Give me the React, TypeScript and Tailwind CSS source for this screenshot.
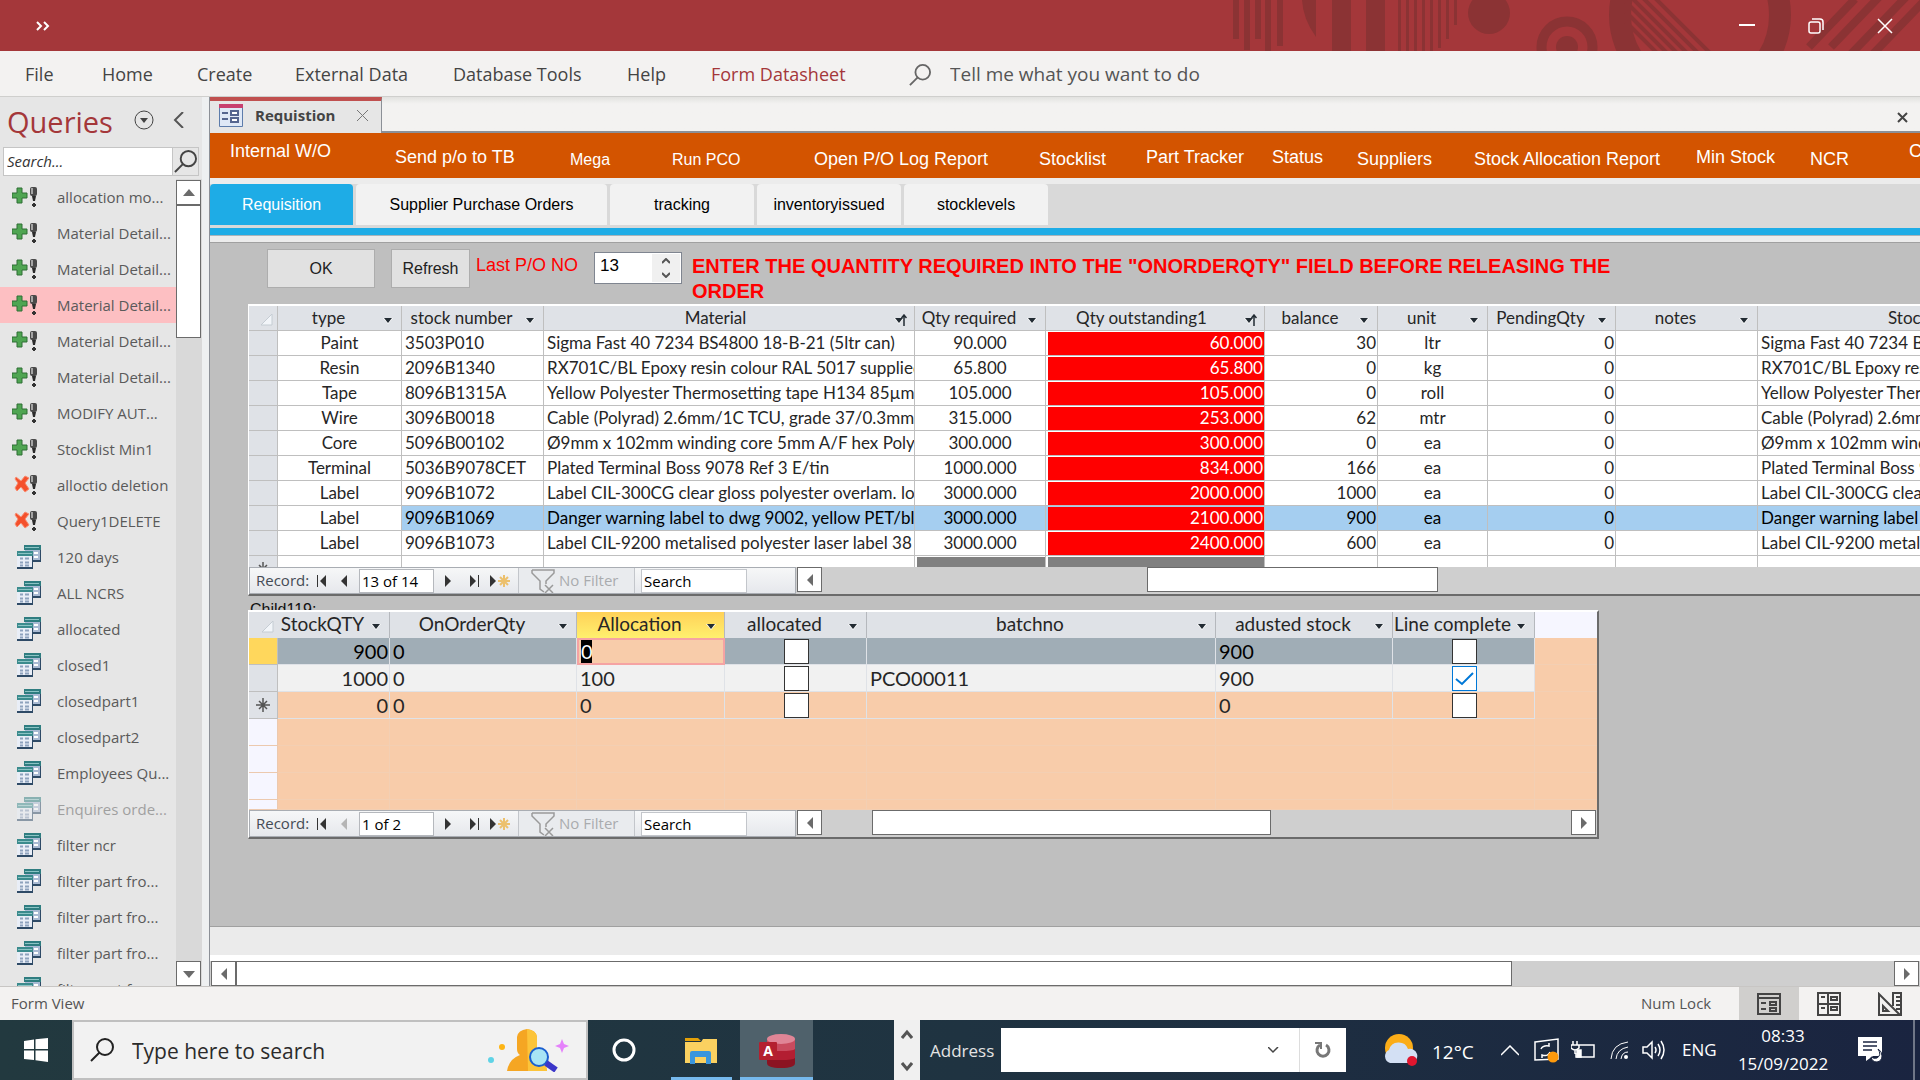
import type { ReactNode } from 'react';
import clsx from 'clsx';

const queries = [
  { name: 'allocation mo...', kind: 'append' },
  { name: 'Material Detail...', kind: 'append' },
  { name: 'Material Detail...', kind: 'append' },
  { name: 'Material Detail...', kind: 'append', active: true },
  { name: 'Material Detail...', kind: 'append' },
  { name: 'Material Detail...', kind: 'append' },
  { name: 'MODIFY AUT...', kind: 'append' },
  { name: 'Stocklist Min1', kind: 'append' },
  { name: 'alloctio deletion', kind: 'delete' },
  { name: 'Query1DELETE', kind: 'delete' },
  { name: '120 days', kind: 'select' },
  { name: 'ALL NCRS', kind: 'select' },
  { name: 'allocated', kind: 'select' },
  { name: 'closed1', kind: 'select' },
  { name: 'closedpart1', kind: 'select' },
  { name: 'closedpart2', kind: 'select' },
  { name: 'Employees Qu...', kind: 'select' },
  { name: 'Enquires orde...', kind: 'select', hidden: true },
  { name: 'filter ncr', kind: 'select' },
  { name: 'filter part fro...', kind: 'select' },
  { name: 'filter part fro...', kind: 'select' },
  { name: 'filter part fro...', kind: 'select' },
  { name: 'filter part fro...', kind: 'select' },
];

const ribbonTabs = [
  { label: 'File', slot: 'w-[77px]' },
  { label: 'Home', slot: 'w-[95px]' },
  { label: 'Create', slot: 'w-[98px]' },
  { label: 'External Data', slot: 'w-[158px]' },
  { label: 'Database Tools', slot: 'w-[174px]' },
  { label: 'Help', slot: 'w-[84px]' },
  { label: 'Form Datasheet', slot: 'w-[198px]', active: true },
];

const formLinks = [
  { label: 'Internal W/O', slot: 'w-[165px] pb-3' },
  { label: 'Send p/o to TB', slot: 'w-[175px]' },
  { label: 'Mega', slot: 'w-[102px] pt-1', small: true },
  { label: 'Run PCO', slot: 'w-[142px] pt-1', small: true },
  { label: 'Open P/O Log Report', slot: 'w-[225px] pt-1' },
  { label: 'Stocklist', slot: 'w-[107px] pt-1' },
  { label: 'Part Tracker', slot: 'w-[126px]' },
  { label: 'Status', slot: 'w-[85px]' },
  { label: 'Suppliers', slot: 'w-[117px] pt-1' },
  { label: 'Stock Allocation Report', slot: 'w-[222px] pt-1' },
  { label: 'Min Stock', slot: 'w-[114px]' },
  { label: 'NCR', slot: 'w-[99px] pt-1' },
  { label: 'C', slot: 'w-[40px] pb-3' },
];

const stockRows = [
  ['Paint', '3503P010', 'Sigma Fast 40 7234 BS4800 18-B-21 (5ltr can)', '90.000', '60.000', '30', 'ltr'],
  ['Resin', '2096B1340', 'RX701C/BL Epoxy resin colour RAL 5017 supplied', '65.800', '65.800', '0', 'kg'],
  ['Tape', '8096B1315A', 'Yellow Polyester Thermosetting tape H134 85µm x', '105.000', '105.000', '0', 'roll'],
  ['Wire', '3096B0018', 'Cable (Polyrad) 2.6mm/1C TCU, grade 37/0.3mm 7', '315.000', '253.000', '62', 'mtr'],
  ['Core', '5096B00102', 'Ø9mm x 102mm winding core 5mm A/F hex Polypro', '300.000', '300.000', '0', 'ea'],
  ['Terminal', '5036B9078CET', 'Plated Terminal Boss 9078 Ref 3 E/tin', '1000.000', '834.000', '166', 'ea'],
  ['Label', '9096B1072', 'Label CIL-300CG clear gloss polyester overlam. lo', '3000.000', '2000.000', '1000', 'ea'],
  ['Label', '9096B1069', 'Danger warning label to dwg 9002, yellow PET/bla', '3000.000', '2100.000', '900', 'ea'],
  ['Label', '9096B1073', 'Label CIL-9200 metalised polyester laser label 38', '3000.000', '2400.000', '600', 'ea'],
];
const selectedStock = 7;

const stockColumns = [
  { label: 'type', width: 124 },
  { label: 'stock number', width: 142 },
  { label: 'Material', width: 371, sorted: true },
  { label: 'Qty required', width: 131 },
  { label: 'Qty outstanding1', width: 219, sorted: true },
  { label: 'balance', width: 113 },
  { label: 'unit', width: 110 },
  { label: 'PendingQty', width: 128 },
  { label: 'notes', width: 142 },
];

const batchColumns = [
  { label: 'StockQTY', width: 112 },
  { label: 'OnOrderQty', width: 187 },
  { label: 'Allocation', width: 148, active: true },
  { label: 'allocated', width: 142 },
  { label: 'batchno', width: 349 },
  { label: 'adusted stock', width: 177 },
  { label: 'Line complete', width: 142 },
];

const batchRows = [
  { stock: '900', order: '0', allocation: '0', batch: '', adjusted: '900', complete: false },
  { stock: '1000', order: '0', allocation: '100', batch: 'PCO00011', adjusted: '900', complete: true },
  { stock: '0', order: '0', allocation: '0', batch: '', adjusted: '0', complete: false },
];

function QueryIcon({ kind }: { kind: string }) {
  if (kind === 'select') {
    return (
      <svg width="24" height="24" viewBox="0 0 24 24" className="ml-[5px] shrink-0">
        <rect x="8" y="0" width="16" height="17" fill="#2e4a66" />
        <rect x="8" y="0" width="15" height="15" fill="#a9bad3" />
        <rect x="7" y="0" width="17" height="5" fill="#2f7d80" />
        <path d="M8 2.500h14" stroke="#8cc4c4" />
        <rect x="17" y="7" width="4" height="2" fill="#fff" />
        <rect x="17" y="11" width="4" height="2" fill="#fff" />
        <rect x="0" y="6" width="16" height="18" fill="#2e4a66" />
        <rect x="0" y="6" width="15" height="16" fill="#e9eef7" />
        <rect x="0" y="6" width="16" height="5" fill="#3b8b8d" />
        <path d="M1 8.500h14" stroke="#8cc4c4" />
        <path d="M3 13.500h3M8 13.500h4M3 17.500h3M8 17.500h4M3 20.500h3M8 20.500h4" stroke="#8ea2bd" strokeWidth="2" />
      </svg>
    );
  }
  return (
    <svg width="26" height="20" viewBox="0 0 26 20" className="shrink-0">
      {kind === 'append' ? (
        <path d="M5 1h5v5h5v5h-5v5H5v-5H0V6h5z" fill="#4fa552" stroke="#2f6e35" />
      ) : (
        <path d="M4 2l5 4 4-5 4 2-4 5 4 6-4 3-4-5-4 4-2-3 3-5-3-4z" fill="#f4502c" stroke="#f98c70" />
      )}
      <rect x="18" y="0" width="7" height="9" rx="2" fill="#4a4a4a" />
      <rect x="19" y="1" width="2" height="6" fill="#a5a5a5" />
      <path d="M20 9h4l-1 5h-2z" fill="#2b2b2b" />
      <path d="M20 18h4M22 16v4" stroke="#333" strokeWidth="2" />
    </svg>
  );
}

function SearchGlyph({ size, color }: { size: number; color: string }) {
  return (
    <svg width={size} height={size} viewBox="0 0 24 24" fill="none" stroke={color} strokeWidth="2">
      <circle cx="15" cy="9" r="8" />
      <path d="M9.500 14.500L1 23" />
    </svg>
  );
}

function Arrow({ dir, color = '#6b6b6b' }: { dir: 'up' | 'down' | 'left' | 'right'; color?: string }) {
  const paths = {
    up: 'M0 9l6-7 6 7z',
    down: 'M0 3l6 7 6-7z',
    left: 'M9 0L3 6l6 6z',
    right: 'M3 0l6 6-6 6z',
  };
  return (
    <svg width="12" height="12" viewBox="0 0 12 12">
      <path d={paths[dir]} fill={color} />
    </svg>
  );
}

function ScrollButton({ dir }: { dir: 'up' | 'down' | 'left' | 'right' }) {
  return (
    <button aria-label={`Scroll ${dir}`} className="flex h-[25px] w-[25px] shrink-0 items-center justify-center border border-[#6b6b6b] bg-white">
      <Arrow dir={dir} />
    </button>
  );
}

function TitleBar() {
  return (
    <header className="relative flex h-[51px] shrink-0 items-center justify-between overflow-hidden bg-[#a4373a] text-white">
      <svg className="absolute top-0 right-0" width="690" height="51" viewBox="1230 0 690 51" fill="#8b3334">
        <path d="M1233 0h6v39h-6zM1244 0h6v50h-6zM1255 0h6v39h-6zM1265 0h6v51h-6zM1277 0h6v46h-6z" />
        <path d="M1302 0h14v37q-13-18-14-37z" />
        <path d="M1332 0h19v51h-19zM1366 0h19v51h-19z" />
        <path d="M1398 0h3v51h-3zM1406 0h3v51h-3zM1414 0h3v51h-3zM1422 0h3v51h-3zM1430 0h3v51h-3zM1438 0h3v48h-3zM1446 0h3v39h-3zM1454 0h3v25h-3z" />
        <circle cx="1489" cy="13" r="21" />
        <circle cx="1567" cy="47" r="25.500" fill="none" stroke="#8b3334" strokeWidth="10" />
        <circle cx="1567" cy="47" r="11" />
        <circle cx="1700" cy="15" r="80" fill="none" stroke="#8b3334" strokeWidth="22" />
        <path d="M1626 2l54 54M1626 12l44 44M1626 22l34 34M1632-2l58 58M1643-2l58 58M1655-2l58 58" stroke="#8b3334" strokeWidth="4" />
        <path d="M1809 47l46-48M1831 47l50-52M1850 55l56-58M1872 55l56-58" stroke="#8b3334" strokeWidth="8" />
      </svg>
      <button aria-label="Customize Quick Access Toolbar" className="ml-9 flex h-8 w-8 items-center">
        <svg width="14" height="10" viewBox="0 0 14 10" fill="none" stroke="#fff" strokeWidth="2">
          <path d="M1 1l4 4-4 4M8 1l4 4-4 4" />
        </svg>
      </button>
      <div className="relative flex items-center gap-[53px] pr-[27px]">
        <button aria-label="Minimize">
          <svg width="16" height="16" viewBox="0 0 16 16" stroke="#fff" strokeWidth="2"><path d="M0 7h16" /></svg>
        </button>
        <button aria-label="Restore">
          <svg width="16" height="16" viewBox="0 0 16 16" fill="none" stroke="#fff" strokeWidth="1.500">
            <rect x="1" y="4" width="11" height="11" rx="2" />
            <path d="M4 1h8q3 0 3 3v8" />
          </svg>
        </button>
        <button aria-label="Close">
          <svg width="16" height="16" viewBox="0 0 16 16" stroke="#fff" strokeWidth="1.500"><path d="M1 1l14 14M15 1L1 15" /></svg>
        </button>
      </div>
    </header>
  );
}

function Ribbon() {
  return (
    <nav className="flex h-[46px] shrink-0 items-center border-b border-[#cfcfcd] bg-[#f3f2f1] pt-[2px] pl-[25px] text-[18px] text-[#444]">
      {ribbonTabs.map((tab) => (
        <button key={tab.label} className={clsx('shrink-0 text-left whitespace-nowrap', tab.slot, tab.active && 'text-[#a4373a]')}>
          {tab.label}
        </button>
      ))}
      <label className="flex items-center gap-[19px]">
        <SearchGlyph size={22} color="#666" />
        <input aria-label="Tell me what you want to do" placeholder="Tell me what you want to do" className="w-72 bg-transparent text-[19px] placeholder:text-[#555] outline-none" />
      </label>
    </nav>
  );
}

function Sidebar() {
  return (
    <aside className="flex w-[202px] shrink-0 flex-col bg-[#e6e6e6]">
      <div className="flex h-[50px] items-center pl-[7px]">
        <h2 className="w-[127px] text-[29px] text-[#a4373a]">Queries</h2>
        <button aria-label="Object type" className="-mt-1">
          <svg width="20" height="20" viewBox="0 0 20 20" fill="none" stroke="#444">
            <circle cx="10" cy="10" r="9" />
            <path d="M6 8h8l-4 5z" fill="#444" stroke="none" />
          </svg>
        </button>
        <button aria-label="Collapse pane" className="-mt-1 ml-[19px]">
          <svg width="11" height="16" viewBox="0 0 11 16" fill="none" stroke="#555" strokeWidth="2"><path d="M10 0L2 8l8 8" /></svg>
        </button>
      </div>
      <label className="ml-[3px] flex h-[29px] w-[196px] border border-[#c5c5c5] bg-white">
        <input aria-label="Search queries" placeholder="Search..." className="min-w-0 flex-1 pl-[3px] text-[15px] italic placeholder:text-[#333] outline-none" />
        <span className="flex w-[26px] items-center justify-center border-l border-[#c5c5c5] bg-[#e6e6e6]">
          <SearchGlyph size={23} color="#444" />
        </span>
      </label>
      <div className="mt-[3px] flex min-h-0 flex-1">
        <ul className="w-[176px] overflow-hidden text-[15px] text-[#5a5a5a]">
          {queries.map((query, index) => (
            <li key={index} className={clsx('h-9', query.hidden && 'opacity-50')}>
              <button className={clsx('flex h-9 w-full items-center pl-3 text-left whitespace-nowrap', query.active && 'bg-[#fdbfc2]')}>
                <span className="w-[45px]"><QueryIcon kind={query.kind} /></span>
                {query.name}
              </button>
            </li>
          ))}
        </ul>
        <div className="flex flex-1 flex-col bg-[#d9d9d9] pr-px pt-px">
          <ScrollButton dir="up" />
          <div className="h-[133px] border border-[#6b6b6b] bg-white" />
          <div className="flex-1" />
          <ScrollButton dir="down" />
        </div>
      </div>
    </aside>
  );
}

function ColumnHeader({ label, sorted }: { label: string; sorted?: boolean }) {
  return (
    <div className="flex items-center overflow-hidden whitespace-nowrap">
      <span className="min-w-0 flex-1 overflow-hidden text-center">{label}</span>
      <button aria-label={`Filter ${label}`} className={sorted ? 'mx-[7px] mt-1' : 'mr-2 ml-1 mt-1'}>
        <svg width={sorted ? 13 : 10} height="12" viewBox={sorted ? '0 0 13 12' : '0 0 10 12'}>
          <path d="M0 4h10L5 10z" fill="#fff" />
          <path d="M1 4h8L5 9z" fill="#222b33" />
          {sorted && <path d="M10 12V2M7.500 4L10 1l2.500 3" stroke="#222b33" strokeWidth="1.500" fill="none" />}
        </svg>
      </button>
    </div>
  );
}

function Corner() {
  return (
    <svg width="12" height="12" viewBox="0 0 12 12" className="ml-auto mt-1 mr-1">
      <path d="M11 0v11H0z" fill="#f2f5f9" stroke="#c5ccd3" />
    </svg>
  );
}

function NewRowMark() {
  return (
    <svg width="14" height="14" viewBox="0 0 14 14" className="mx-auto block" stroke="#555" strokeWidth="1.500">
      <path d="M7 0v14M0 7h14M3 3l8 8M11 3l-8 8" />
    </svg>
  );
}

function RecordBar({ position, atStart, children }: { position: string; atStart?: boolean; children: ReactNode }) {
  return (
    <div className="flex h-[27px] bg-[#cfcfcf] text-[15px]">
      <div className="flex w-[547px] shrink-0 items-center border border-[#a9adb3] bg-linear-to-b from-[#f6f7f8] to-[#e6e8ec]">
        <span className="w-[66px] pl-[6px] text-[#444b55]">Record:</span>
        <button aria-label="First record" className="w-[22px]">
          <svg width="12" height="12" viewBox="0 0 12 12" fill="#333"><path d="M1 0h1v12H1zM10 0v12L4 6z" /></svg>
        </button>
        <button aria-label="Previous record" className="w-[21px]">
          <Arrow dir="left" color={atStart ? '#b5b5b5' : '#333'} />
        </button>
        <input aria-label="Current record" defaultValue={position} className="h-6 w-[75px] border border-[#b5b8bd] bg-white pl-[2px] text-black outline-none" />
        <button aria-label="Next record" className="ml-2 w-[26px]"><Arrow dir="right" color="#333" /></button>
        <button aria-label="Last record" className="w-[22px]">
          <svg width="12" height="12" viewBox="0 0 12 12" fill="#333"><path d="M10 0h1v12h-1zM2 0v12l6-6z" /></svg>
        </button>
        <button aria-label="New record" className="w-[28px]">
          <svg width="21" height="14" viewBox="0 0 21 14">
            <path d="M0 1v12l6-6z" fill="#333" />
            <path d="M14 1v12M8 7h12M10 3l8 8M18 3l-8 8" stroke="#ecc06c" strokeWidth="2" />
          </svg>
        </button>
        <button className="flex h-full w-[117px] items-center gap-1 border-x border-[#c3c6cb] bg-[#e9ebee] pl-3 text-[#a9abae]">
          <svg width="24" height="24" viewBox="0 0 24 24" fill="none" stroke="#9a9a9a" strokeWidth="1.500">
            <path d="M1 1h22v3l-8 8v3M1 1v3l8 8v8l4 3M14 16l8 8M22 16l-8 8" />
          </svg>
          <span className="whitespace-nowrap">No Filter</span>
        </button>
        <input aria-label="Search records" defaultValue="Search" className="ml-[6px] h-6 w-[106px] border border-[#c3c6cb] bg-white pl-[2px] text-black outline-none" />
      </div>
      {children}
    </div>
  );
}

function StockGrid() {
  const cell = 'border-r border-b border-[#bfbfbf] overflow-hidden whitespace-nowrap p-0';
  return (
    <section className="overflow-hidden border-t-2 border-l border-b-2 border-t-white border-l-white border-b-[#6b6b6b] bg-white">
      <table className="w-[1880px] table-fixed border-separate border-spacing-0 font-['Comic_Sans_MS','Lato',sans-serif] text-[17px] leading-[24px] text-[#262626]">
        <colgroup>
          <col className="w-[29px]" />
          {stockColumns.map((column) => <col key={column.label} style={{ width: column.width }} />)}
          <col />
        </colgroup>
        <thead>
          <tr className="h-[25px] bg-[#dfe2e7]">
            <th className={cell}><Corner /></th>
            {stockColumns.map((column) => (
              <th key={column.label} className={clsx(cell, 'font-normal')}>
                <ColumnHeader label={column.label} sorted={column.sorted} />
              </th>
            ))}
            <th className={clsx(cell, 'pl-[130px] text-left font-normal')}>Stock</th>
          </tr>
        </thead>
        <tbody>
          {stockRows.map((row, index) => {
            const tint = index === selectedStock && 'bg-[#a5cef0] text-black';
            return (
              <tr key={row[1]} className="h-[25px]">
                <td className={clsx(cell, 'bg-[#dfe2e7]')} />
                <td className={clsx(cell, 'text-center')}>{row[0]}</td>
                <td className={clsx(cell, tint, 'pl-[3px]')}>{row[1]}</td>
                <td className={clsx(cell, tint, 'pl-[3px]')}>{row[2]}</td>
                <td className={clsx(cell, tint, 'text-center')}>{row[3]}</td>
                <td className={clsx(cell, tint)}>
                  <div className="ml-[2px] mt-px h-[23px] bg-[#ff0000] pr-px text-right leading-[22px] text-white">{row[4]}</div>
                </td>
                <td className={clsx(cell, tint, 'pr-px text-right')}>{row[5]}</td>
                <td className={clsx(cell, tint, 'text-center')}>{row[6]}</td>
                <td className={clsx(cell, tint, 'pr-px text-right')}>0</td>
                <td className={clsx(cell, tint)} />
                <td className={clsx(cell, tint, 'pl-[3px]')}>{row[2]}</td>
              </tr>
            );
          })}
          <tr>
            <td className="border-r border-[#bfbfbf] bg-[#dfe2e7] p-0">
              <div className="h-[11px] overflow-hidden pt-[6px]"><NewRowMark /></div>
            </td>
            {stockColumns.map((column) => (
              <td key={column.label} className="border-r border-[#bfbfbf] p-0">
                {column.label.startsWith('Qty') && <div className="ml-[2px] mt-px h-[10px] bg-[#808080]" />}
              </td>
            ))}
            <td />
          </tr>
        </tbody>
      </table>
      <RecordBar position="13 of 14">
        <div className="ml-px flex flex-1">
          <ScrollButton dir="left" />
          <div className="ml-[325px] h-[25px] w-[291px] border border-[#6b6b6b] bg-white" />
        </div>
      </RecordBar>
    </section>
  );
}

function Tick({ label, checked }: { label: string; checked?: boolean }) {
  return (
    <span className="relative mx-auto block h-[25px] w-[25px]">
      <input
        type="checkbox"
        aria-label={label}
        defaultChecked={checked}
        className="peer block h-[25px] w-[25px] appearance-none border border-[#333] bg-white checked:border-[#0078d7]"
      />
      <svg className="pointer-events-none absolute inset-0 hidden peer-checked:block" width="25" height="25" viewBox="0 0 25 25" fill="none" stroke="#0078d7" strokeWidth="2">
        <path d="M4 13l6 5L21 7" />
      </svg>
    </span>
  );
}

function BatchGrid() {
  const cell = 'border-r border-b border-[#dfe2e7] overflow-hidden whitespace-nowrap p-0';
  const blank = 'border-r border-b border-[#f3cfb3] p-0';
  return (
    <section className="w-[1351px] overflow-hidden border-t-2 border-r-2 border-b-2 border-l border-t-white border-r-[#6b6b6b] border-b-[#6b6b6b] border-l-white bg-[#f8ccaa]">
      <table className="w-full table-fixed border-separate border-spacing-0 font-['Tw_Cen_MT','Lato',sans-serif] text-[20px] leading-[24px] text-[#262626]">
        <colgroup>
          <col className="w-[29px]" />
          {batchColumns.map((column) => <col key={column.label} style={{ width: column.width }} />)}
          <col />
        </colgroup>
        <thead>
          <tr className="h-[26px] bg-[#dfe2e7] text-[19px]">
            <th className="p-0"><Corner /></th>
            {batchColumns.map((column) => (
              <th
                key={column.label}
                className={clsx('overflow-hidden border-r border-[#b5b8bd] p-0 pb-[2px] font-normal', column.active && 'bg-linear-to-b from-[#ffd158] to-[#fff06e]')}
              >
                <ColumnHeader label={column.label} />
              </th>
            ))}
            <th className="bg-[#f6f6ff]" />
          </tr>
        </thead>
        <tbody>
          {batchRows.map((row, index) => (
            <tr key={index} className={clsx('h-[27px]', index === 0 && 'bg-[#a0adb6] text-black', index === 1 && 'bg-[#f1f1f1]')}>
              <td className={clsx('border-r border-b border-[#bfbfbf] p-0', index === 0 ? 'bg-[#ffd75c]' : 'bg-[#dfe2e7]')}>
                {index === 2 && <NewRowMark />}
              </td>
              <td className={clsx(cell, 'pr-px text-right')}>{row.stock}</td>
              <td className={clsx(cell, 'pl-[3px]')}>{row.order}</td>
              {index === 0 ? (
                <td className="border-2 border-[#f5a3a3] bg-[#f8ccaa] p-0 pl-[2px] leading-[23px]">
                  <span className="block w-[11px] bg-black text-white">{row.allocation}</span>
                </td>
              ) : (
                <td className={clsx(cell, 'pl-[3px]')}>{row.allocation}</td>
              )}
              <td className={clsx(cell, 'pl-[2px]')}><Tick label={`allocated ${index + 1}`} /></td>
              <td className={clsx(cell, 'pl-[3px]')}>{row.batch}</td>
              <td className={clsx(cell, 'pl-[3px]')}>{row.adjusted}</td>
              <td className={clsx(cell, 'pl-[2px]')}><Tick label={`Line complete ${index + 1}`} checked={row.complete} /></td>
              <td className="border-b border-[#f3cfb3] bg-[#f8ccaa] p-0" />
            </tr>
          ))}
          {[0, 1, 2, 3].map((line) => (
            <tr key={line} className={line === 3 ? 'h-[10px]' : 'h-[27px]'}>
              <td className="border-r border-b border-[#ecc9ae] bg-[#f6f6ff] p-0" />
              {batchColumns.map((column) => <td key={column.label} className={blank} />)}
              <td className="border-b border-[#f3cfb3] p-0" />
            </tr>
          ))}
        </tbody>
      </table>
      <RecordBar position="1 of 2" atStart>
        <div className="ml-px flex flex-1 pr-px">
          <ScrollButton dir="left" />
          <div className="ml-[50px] h-[25px] w-[399px] border border-[#6b6b6b] bg-white" />
          <div className="flex-1" />
          <ScrollButton dir="right" />
        </div>
      </RecordBar>
    </section>
  );
}

function FormView() {
  const tab = 'h-[41px] rounded-t-sm bg-[#f2f2f2] text-black';
  return (
    <main className="flex min-w-0 flex-1 flex-col overflow-hidden border-l border-[#8c9097] bg-[#f3f2f1]">
      <div className="flex h-[36px] shrink-0 items-end justify-between border-b-2 border-[#8c9097] bg-linear-to-b from-[#e2e2e0] to-[#f3f2f1] to-20%">
        <div className="-mb-[2px] flex h-[36px] w-[172px] items-center border-t-4 border-r border-t-[#c0504f] border-r-[#8c9097] bg-[#e6e6e6] pb-1 pl-[9px]">
          <svg width="24" height="23" viewBox="0 0 24 23" className="shrink-0">
            <rect width="24" height="23" rx="1" fill="#5d7cab" />
            <rect x="1" y="3" width="22" height="19" fill="#dfe8f6" />
            <rect width="24" height="4" fill="#c8406f" />
            <path d="M3 9h6M3 15h6" stroke="#55658f" strokeWidth="2" />
            <path d="M12 7h7v4h-7zM12 14h7v4h-7z" fill="#fff" stroke="#55658f" strokeWidth="2" />
          </svg>
          <span className="w-[114px] pl-3 text-[15px] font-bold text-[#444]">Requistion</span>
          <button aria-label="Close Requistion">
            <svg width="11" height="11" viewBox="0 0 11 11" stroke="#777"><path d="M0 0l11 11M11 0L0 11" /></svg>
          </button>
        </div>
        <button aria-label="Close form" className="mr-3 mb-2">
          <svg width="11" height="11" viewBox="0 0 11 11" stroke="#444" strokeWidth="2"><path d="M1 1l9 9M10 1l-9 9" /></svg>
        </button>
      </div>

      <div className="flex h-[45px] shrink-0 items-stretch overflow-hidden bg-[#d35400] pt-1 pl-5 font-['Liberation_Sans',Arial,sans-serif] text-white">
        {formLinks.map((link) => (
          <button key={link.label} className={clsx('shrink-0 text-left whitespace-nowrap', link.slot, link.small ? 'text-[16px]' : 'text-[18px]')}>
            {link.label}
          </button>
        ))}
      </div>

      <div className="shrink-0 bg-[#ececec] pt-[6px] pb-[6px] font-['Liberation_Sans',Arial,sans-serif] text-[16px]">
        <div className="flex gap-[3px] bg-[#d9d9d9] pb-[3px]">
          <button className="h-[41px] w-[143px] rounded-t-sm bg-[#1eace6] text-white">Requisition</button>
          <button className={clsx(tab, 'w-[251px]')}>Supplier Purchase Orders</button>
          <button className={clsx(tab, 'w-[144px]')}>tracking</button>
          <button className={clsx(tab, 'w-[144px]')}>inventoryissued</button>
          <button className={clsx(tab, 'w-[144px]')}>stocklevels</button>
        </div>
        <div className="h-2 border-b border-[#a9b4ba] bg-[#1eace6]" />
      </div>

      <div className="min-h-0 flex-1 border-y border-[#a0a0a0] bg-[#bfbfbf] pl-[38px]">
        <div className="flex h-[61px] items-start pl-[19px] pt-[6px] font-['Liberation_Sans',Arial,sans-serif]">
          <button className="h-[39px] w-[108px] border border-[#adadad] bg-[#e1e1e1] text-[16px] text-[#222]">OK</button>
          <button className="ml-4 h-[39px] w-[79px] border border-[#adadad] bg-[#e1e1e1] text-[16px] text-[#222]">Refresh</button>
          <label htmlFor="lastPo" className="w-[124px] shrink-0 pt-1 pl-[6px] text-[18px] leading-[24px] text-[#ff0000]">Last P/O NO</label>
          <div className="mt-[3px] flex h-[32px] w-[88px] shrink-0 border border-[#7f8590] bg-white p-px">
            <input id="lastPo" defaultValue="13" className="min-w-0 flex-1 pl-1 pb-1 text-[17px] outline-none" />
            <div className="flex w-[28px] flex-col items-center justify-around bg-[#f0f0f0]">
              <button aria-label="Increase">
                <svg width="8" height="6" viewBox="0 0 8 6" fill="none" stroke="#555" strokeWidth="2" className="block"><path d="M0 5l4-4 4 4" /></svg>
              </button>
              <button aria-label="Decrease">
                <svg width="8" height="6" viewBox="0 0 8 6" fill="none" stroke="#555" strokeWidth="2" className="block"><path d="M0 1l4 4 4-4" /></svg>
              </button>
            </div>
          </div>
          <p className="ml-[10px] w-[940px] pt-[5px] text-[20px] leading-[25px] font-bold text-[#ff0000]">
            ENTER THE QUANTITY REQUIRED INTO THE "ONORDERQTY" FIELD BEFORE RELEASING THE ORDER
          </p>
        </div>
        <StockGrid />
        <div className="h-[14px] overflow-hidden pt-[5px] pl-[2px] font-['Liberation_Sans',Arial,sans-serif] text-[16px] leading-[18px] text-[#111]">Child119:</div>
        <BatchGrid />
      </div>
      <div className="h-[28px] shrink-0 bg-[#ebebeb]" />
      <div className="flex shrink-0 bg-[#cfcfcf]">
        <div className="flex w-full border-t-[6px] border-white pr-px pl-px">
          <ScrollButton dir="left" />
          <div className="h-[25px] w-[1276px] border border-[#6b6b6b] bg-white" />
          <div className="flex-1" />
          <ScrollButton dir="right" />
        </div>
      </div>
    </main>
  );
}

function StatusBar() {
  return (
    <footer className="flex h-[34px] shrink-0 items-center border-t border-[#c8c6c4] bg-[#f3f2f1] text-[15px] text-[#555]">
      <span className="flex-1 pl-[11px]">Form View</span>
      <span className="w-[98px]">Num Lock</span>
      <button aria-label="Form View" className="flex h-full w-[60px] items-center justify-center bg-[#d0cfcd]">
        <svg width="24" height="22" viewBox="0 0 24 22" fill="none" stroke="#444" strokeWidth="2">
          <path d="M1 1h22v20H1zM1 5h22M4 10h5M4 16h5M13 9h6v3h-6zM13 15h6v3h-6z" />
        </svg>
      </button>
      <button aria-label="Layout View" className="flex w-[60px] justify-center">
        <svg width="24" height="24" viewBox="0 0 24 24" fill="none" stroke="#444" strokeWidth="2">
          <path d="M1 1h22v22H1zM11 1v22M1 12h22M4 5h4M4 16h4M14 5h6v3h-6zM14 15h6v3h-6z" />
        </svg>
      </button>
      <button aria-label="Design View" className="flex w-[61px] justify-center">
        <svg width="24" height="24" viewBox="0 0 24 24" fill="none" stroke="#444" strokeWidth="2">
          <path d="M1 2v21h21zM5 14v5h5zM15 14V1h8v22h-2M18 5h5M18 9h5M18 13h5M18 17h5" />
        </svg>
      </button>
    </footer>
  );
}

function Taskbar() {
  return (
    <div className="flex h-[60px] shrink-0 items-stretch bg-linear-to-r from-[#22393f] via-[#1f3341] to-[#1a2440] text-white">
      <button aria-label="Start" className="flex w-[72px] items-center justify-center">
        <svg width="24" height="24" viewBox="0 0 24 24" fill="#fff">
          <path d="M0 3l10-1.500V11H0zM11.500 1.300L24 0v11H11.500zM0 12.500h10V22L0 21zM11.500 12.500H24V24l-12.500-1.800z" />
        </svg>
      </button>
      <label className="flex w-[516px] items-center border-2 border-[#c0c0c0] bg-[#f2f2f2] pl-4 text-[21px] text-[#2b2b2b]">
        <SearchGlyph size={24} color="#222" />
        <input aria-label="Type here to search" placeholder="Type here to search" className="ml-[18px] min-w-0 flex-1 pt-1 placeholder:text-[#2b2b2b] outline-none" />
        <svg width="82" height="44" viewBox="0 0 82 44" className="mr-4">
          <circle cx="14" cy="19" r="3" fill="#fdb515" />
          <circle cx="3" cy="32" r="3" fill="#5fd3e6" />
          <path d="M19 43q2-12 13-16-3-2-3-6V9q1-7 10-8 9 1 10 8v12q0 4-3 6 12 4 13 16z" fill="#f5a623" />
          <path d="M39 1q9 1 10 8v12q0 4-3 6 12 4 13 16H40z" fill="#fcc43a" />
          <circle cx="51" cy="29" r="9" fill="#a8e4f5" stroke="#1a5fd0" strokeWidth="2" />
          <path d="M58 35l10 7" stroke="#3b36c9" strokeWidth="6" />
          <path d="M74 11l2 5 5 2-5 2-2 5-2-5-5-2 5-2z" fill="#e582fb" />
        </svg>
      </label>
      <button aria-label="Cortana" className="flex w-[72px] items-center justify-center">
        <svg width="24" height="24" viewBox="0 0 24 24" fill="none" stroke="#fff" strokeWidth="3"><circle cx="12" cy="12" r="10" /></svg>
      </button>
      <button aria-label="File Explorer" className="ml-[11px] flex w-[61px] items-center justify-center border-b-[3px] border-[#76b9ed] pt-1">
        <svg width="33" height="28" viewBox="0 0 33 28">
          <path d="M0 1h13l3 3H0z" fill="#e3a008" />
          <path d="M0 5h16l2-3h14v24H0z" fill="#fbd160" />
          <path d="M5 27V16q0-2 2-2h17q2 0 2 2v11h-5v-7H10v7z" fill="#3a96dd" />
        </svg>
      </button>
      <button aria-label="Access" className="ml-2 flex w-[73px] items-center justify-center border-b-[3px] border-[#76b9ed] bg-[#4f616b] pt-1">
        <svg width="36" height="34" viewBox="0 0 36 34">
          <path d="M8 5v24q0 5 14 5t14-5V5z" fill="#8b1322" />
          <path d="M8 5v19q2 2 14 2t14-2V5z" fill="#b31e32" />
          <path d="M8 5v10q2 2 14 2t14-2V5z" fill="#c94b5e" />
          <ellipse cx="22" cy="5" rx="14" ry="5" fill="#e08596" />
          <rect y="8" width="18" height="18" rx="1" fill="#b4202f" />
          <text x="9" y="22" textAnchor="middle" fontSize="14" fontWeight="bold" fill="#fff">A</text>
        </svg>
      </button>
      <div className="ml-[81px] flex w-[26px] flex-col items-center justify-between bg-[#f0f0f0] pt-[9px] pb-2">
        <svg width="12" height="10" viewBox="0 0 12 10" fill="none" stroke="#555" strokeWidth="3"><path d="M1 9l5-6 5 6" /></svg>
        <svg width="12" height="10" viewBox="0 0 12 10" fill="none" stroke="#555" strokeWidth="3"><path d="M1 1l5 6 5-6" /></svg>
      </div>
      <label htmlFor="address" className="flex w-[81px] items-center pt-px pl-[10px] text-[17px] text-[#e4e4e4]">Address</label>
      <div className="my-[8px] flex w-[345px] bg-white text-black">
        <input id="address" className="min-w-0 flex-1 outline-none" />
        <button aria-label="Address history" className="pr-5">
          <svg width="11" height="7" viewBox="0 0 11 7" fill="none" stroke="#444"><path d="M0 0l5 5 5-5" strokeWidth="1.500" /></svg>
        </button>
        <button aria-label="Refresh address" className="flex w-[47px] items-center justify-center border-l border-[#ddd]">
          <svg width="17" height="18" viewBox="0 0 17 18" fill="none" stroke="#777" strokeWidth="3"><path d="M11 4a6 6 0 1 1-6 0" /><path d="M0 2h6v6" strokeWidth="2" /></svg>
        </button>
      </div>
      <div className="flex flex-1 items-center pl-[37px]">
        <button className="flex w-[118px] items-center gap-[14px] text-[19px]">
          <svg width="35" height="32" viewBox="0 0 35 32">
            <circle cx="16" cy="14" r="14" fill="#fbad18" />
            <path d="M7 29a7 7 0 0 1-1-13 10 10 0 0 1 19-1 7 7 0 0 1 4 14z" fill="#d3e0f4" />
            <circle cx="29" cy="27" r="5" fill="#e0162f" />
          </svg>
          <span className="pt-1">12°C</span>
        </button>
        <button aria-label="Show hidden icons" className="w-[33px]">
          <svg width="18" height="11" viewBox="0 0 18 11" fill="none" stroke="#fff" strokeWidth="1.500"><path d="M0 10l9-9 9 9" /></svg>
        </button>
        <button aria-label="Windows Update" className="w-[37px]">
          <svg width="26" height="25" viewBox="0 0 26 25" fill="none" stroke="#fff" strokeWidth="1.500">
            <path d="M1 4l23-3v20L1 22zM7 11q2-4 8-3V5M16 14q-2 5-8 3v3" />
            <circle cx="19" cy="19" r="5.500" fill="#ff9a0c" stroke="none" />
          </svg>
        </button>
        <button aria-label="Power" className="w-[39px]">
          <svg width="24" height="18" viewBox="0 0 24 18" fill="none" stroke="#fff" strokeWidth="1.500">
            <path d="M8 4h15v12H5v-4M2 0v4M6 0v4M0 4h8v3q-4 4-8 0zM4 9v4" />
            <path d="M6 9h4v7H6z" fill="#fff" />
          </svg>
        </button>
        <button aria-label="Network" className="w-[32px]">
          <svg width="19" height="19" viewBox="0 0 19 19" fill="none" stroke="#fff">
            <path d="M1 18Q2 3 18 1M6 18Q7 8 18 6M11 18q1-7 7-7" />
            <circle cx="16" cy="16" r="2" fill="#fff" stroke="none" />
          </svg>
        </button>
        <button aria-label="Volume" className="w-[40px]">
          <svg width="23" height="20" viewBox="0 0 23 20" fill="none" stroke="#fff" strokeWidth="1.500">
            <path d="M1 7h4l5-5v16l-5-5H1zM13 7q2 3 0 6M16 4q4 6 0 12M19 1q6 9 0 18" />
          </svg>
        </button>
        <span className="w-[43px] text-[17px]">ENG</span>
        <button className="w-[116px] text-center text-[17px] leading-[28px]">
          <span className="block">08:33</span>
          <span className="block">15/09/2022</span>
        </button>
        <button aria-label="Notifications" className="ml-[17px]">
          <svg width="25" height="26" viewBox="0 0 25 26">
            <path d="M0 0h24v19h-9l-7 5v-5H0z" fill="#fff" />
            <path d="M5 5h14M5 9h14M5 13h9" stroke="#1b2540" strokeWidth="1.500" />
            <path d="M20 12q4 6-1 9-3 1-6-1 1 5 6 5 5-1 5-6 0-5-4-7z" fill="#fff" stroke="#1b2540" />
          </svg>
        </button>
      </div>
      <div className="w-[7px] border-l-2 border-[#6f7687]" />
    </div>
  );
}

export default function App() {
  return (
    <div className="flex h-screen flex-col overflow-hidden bg-[#f3f2f1] font-['Open_Sans','Noto_Sans',sans-serif]">
      <TitleBar />
      <Ribbon />
      <div className="flex min-h-0 flex-1">
        <Sidebar />
        <div className="w-[7px] shrink-0 bg-[#eef0f1]" />
        <FormView />
      </div>
      <StatusBar />
      <Taskbar />
    </div>
  );
}
